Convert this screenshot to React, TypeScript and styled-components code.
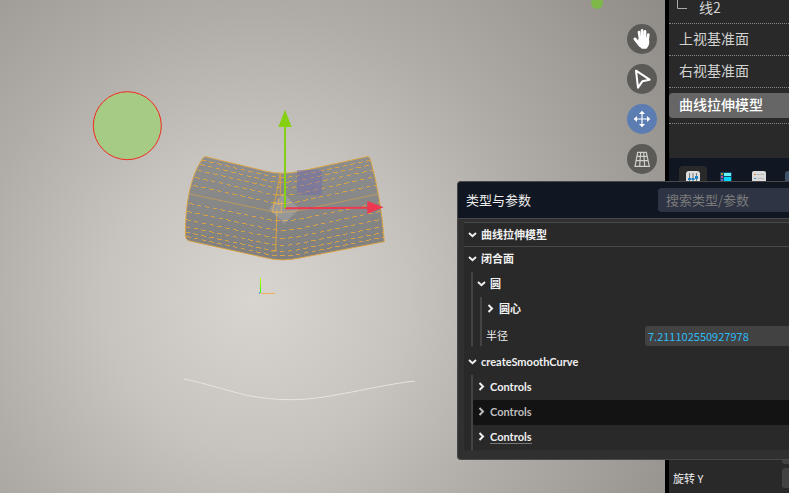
import React from 'react';
import styled, { createGlobalStyle, css } from 'styled-components';

const GlobalStyle = createGlobalStyle`
  * { box-sizing: border-box; }
  body {
    margin: 0;
    overflow: hidden;
    background: #000;
    color: #eee;
    font-family: "Noto Sans CJK SC", "Open Sans", sans-serif;
    font-size: 11px;
  }
  button, input { font: inherit; color: inherit; }
`;

const Workspace = styled.div`
  position: relative;
  display: grid;
  grid-template-columns: minmax(0, 1fr) 120px;
  gap: 4px;
  height: 100vh;
  overflow: hidden;
`;

const Viewport = styled.main`
  position: relative;
  display: flex;
  justify-content: flex-end;
  padding: 24px 8px;
  overflow: hidden;
  background: radial-gradient(circle at 255px 300px, #d8d5d0 0, #c7c4bf 150px, #b0ada8 285px, #a19e99 390px, #8d8a85 520px);
`;

const Scene = styled.svg`
  position: absolute;
  inset: 0;
  width: 100%;
  height: 100%;
`;

const Tools = styled.nav`
  position: relative;
  display: flex;
  flex-direction: column;
  gap: 10px;
`;

const ToolButton = styled.button<{ $active?: boolean }>`
  width: 30px;
  height: 30px;
  padding: 0;
  border: 0;
  border-radius: 50%;
  background: ${(p) => (p.$active ? '#5c7db1' : '#5b5a57')};
  svg { display: block; width: 100%; height: 100%; }
`;

const Sidebar = styled.aside`
  display: flex;
  flex-direction: column;
  min-width: 0;
  overflow: hidden;
  background: #292929;
`;

const Tree = styled.ul`
  height: 158px;
  flex: none;
  margin: 0;
  padding: 0;
  list-style: none;
  display: flex;
  flex-direction: column;
`;

const TreeItem = styled.li<{ $selected?: boolean }>`
  flex: none;
  display: flex;
  align-items: center;
  height: ${(p) => (p.$selected ? 36 : 32)}px;
  border-bottom: 1px dotted #858585;
`;

const TreeChild = styled.li`
  flex: none;
  display: flex;
  align-items: flex-start;
  height: 24px;
  border-bottom: 1px dotted #858585;
  color: #d2d2d2;
  font-size: 14px;
  line-height: 14px;
`;

const Branch = styled.svg`
  flex: none;
  width: 12px;
  height: 16px;
  margin: 0 11px 0 7px;
`;

const TreeLabel = styled.button<{ $selected?: boolean }>`
  flex: 1;
  height: 25px;
  padding: 0 0 4px 10px;
  border: 0;
  border-radius: 4px 0 0 4px;
  background: ${(p) => (p.$selected ? '#666' : 'transparent')};
  color: ${(p) => (p.$selected ? '#fff' : '#d2d2d2')};
  font-size: 14px;
  font-weight: ${(p) => (p.$selected ? 500 : 400)};
  line-height: 20px;
  text-align: left;
  white-space: nowrap;
`;

const TabBar = styled.div`
  flex: none;
  display: flex;
  gap: 5px;
  height: 36px;
  padding: 8px 10px 0;
  background: #111722;
`;

const Tab = styled.button<{ $active?: boolean }>`
  flex: none;
  display: flex;
  justify-content: center;
  width: 28px;
  padding: 4px 0 0;
  border: 0;
  border-radius: 4px 4px 0 0;
  background: ${(p) => (p.$active ? '#292929' : 'transparent')};
  svg { width: 16px; height: 16px; }
`;

const Properties = styled.div`
  flex: 1;
  display: flex;
  flex-direction: column;
  justify-content: flex-end;
  gap: 4px;
  min-height: 0;
  padding-bottom: 5px;
`;

const PropertyRow = styled.label`
  flex: none;
  display: grid;
  grid-template-columns: 109px 1fr;
  align-items: center;
  height: 20px;
  padding-left: 4px;
`;

const fieldStyle = css`
  min-width: 0;
  width: 100%;
  height: 20px;
  border: 0;
  border-radius: 3px 0 0 3px;
  background: #424242;
`;

const PropertyInput = styled.input`
  ${fieldStyle}
`;

const FloatingWindow = styled.section`
  position: absolute;
  top: 181px;
  left: 457px;
  right: 0;
  border: 1px solid #484848;
  border-right: 0;
  border-radius: 4px 0 0 4px;
  background: #303030;
  overflow: hidden;
`;

const WindowHeader = styled.header`
  display: grid;
  grid-template-columns: 192px 1fr;
  gap: 8px;
  align-items: center;
  height: 37px;
  border-bottom: 1px solid #484848;
  background: #111722;
`;

const WindowTitle = styled.h1`
  margin: 0;
  padding-left: 8px;
  font-size: 13px;
  font-weight: 400;
  line-height: 20px;
`;

const Search = styled.input`
  min-width: 0;
  height: 24px;
  padding: 0 8px 2px;
  border: 0;
  border-radius: 4px 0 0 4px;
  background: #2e3444;
  font-size: 13px;
  &::placeholder { color: #7a7a7a; opacity: 1; }
`;

const WindowBody = styled.div`
  margin: 3px 0 9px 6px;
  border-top: 1px solid #484848;
  background: #292929;
`;

const NodeButton = styled.button<{ $tone?: 'hover' | 'link'; $root?: boolean }>`
  display: flex;
  align-items: center;
  gap: 4px;
  width: 100%;
  height: ${(p) => (p.$root ? 24 : 25)}px;
  padding: 0 4px ${(p) => (p.$root ? 0 : 2)}px;
  border: 0;
  border-bottom: ${(p) => (p.$root ? '1px solid #484848' : '0')};
  background: ${(p) => (p.$tone === 'hover' ? '#131313' : 'transparent')};
  color: ${(p) => (p.$tone === 'hover' ? '#bdbdbd' : '#f0f0f0')};
  font-family: Lato, "Noto Sans CJK SC", sans-serif;
  font-weight: 700;
  line-height: 12px;
  text-align: left;
  span { box-shadow: ${(p) => (p.$tone === 'link' ? '0 1px #777' : 'none')}; }
  svg { flex: none; width: 9px; height: 9px; }
`;

const Group = styled.div`
  margin-left: 7px;
  border-left: 2px solid #444;
`;

const FieldRow = styled.label`
  display: grid;
  grid-template-columns: 163px 1fr;
  align-items: center;
  height: 24px;
  padding-top: 4px;
  span { padding: 0 0 2px 4px; }
`;

const ValueInput = styled.input`
  ${fieldStyle}
  padding: 0 3px;
  color: #2ebcf5;
`;

const Spacer = styled.div`
  height: 4px;
`;

function Chevron({ open }: { open?: boolean }) {
  return (
    <svg viewBox="0 0 9 9" fill="none" stroke="currentColor" strokeWidth="2">
      <path d={open ? 'M1 3 4.5 6.2 8 3' : 'M2.5 1 6 4.5 2.5 8'} />
    </svg>
  );
}

type NodeProps = {
  label: string;
  open?: boolean;
  root?: boolean;
  tone?: 'hover' | 'link';
};

function Node({ label, open, root, tone }: NodeProps) {
  return (
    <NodeButton $root={root} $tone={tone} aria-expanded={!!open}>
      <Chevron open={open} />
      <span>{label}</span>
    </NodeButton>
  );
}

// Each rib: left x, left y, fold y, right x, right y (in thirds of a pixel).
const ribs = [
  [100, 185, 235, 597, 185],
  [95, 195, 247, 601, 196],
  [90, 208, 262, 604, 209],
  [83, 226, 279, 608, 225],
  [76, 247, 301, 612, 246],
  [70, 271, 325, 618, 270],
  [60, 297, 352, 624, 297],
  [57, 325, 378, 630, 323],
  [52, 349, 406, 634, 348],
  [48, 374, 430, 637, 372],
  [47, 395, 451, 640, 394],
  [47, 411, 469, 642, 412],
  [48, 424, 483, 643, 426],
  [50, 435, 495, 643, 440],
];

const ribPath = ([lx, ly, my, rx, ry]: number[]) =>
  `M${lx} ${ly} L285 ${my - 7} Q335 ${my + 6} 390 ${my - 6} L${rx} ${ry}`;

function Mesh() {
  return (
    <g transform="translate(170 95) scale(.33333)" fill="none" stroke="#e3a63c" strokeWidth="2.6">
      <path
        d="M107 185 L285 228 Q335 241 390 229 L592 185 Q598 184 601 192 Q634 310 643 440 L390 489 Q335 501 285 488 L55 437 Q46 432 46 420 Q46 270 95 195 Q100 184 107 185Z"
        fill="url(#surface)"
      />
      {ribs.slice(1, -1).map((rib, i) => (
        <path
          key={i}
          d={ribPath(rib)}
          shapeRendering={i === 5 ? undefined : 'crispEdges'}
          strokeDasharray={i === 5 ? undefined : '14 10'}
          strokeOpacity={i === 5 ? 0.65 : 1}
        />
      ))}
      <path d="M330 237 321 290 307 350M331 237V300M326 310V332M334 318V354M321 342 317 468M306 352H336M316 300H340M310 326H330M302 468H321" />
      <path d="M341 295 297 341 343 387 388 341Z" fill="#fff" fillOpacity=".15" stroke="none" />
      <path d="M381 225H456V300H381Z" fill="#6e66b0" fillOpacity=".42" stroke="none" />
      <path d="M345 340 592 338" stroke="#ee3850" strokeWidth="6" />
      <path d="M592 318 641 337 592 356Z" fill="#ee3850" stroke="none" />
      <path d="M345 340V92" stroke="#84d011" strokeWidth="6" />
      <path d="M345 44 365 96H325Z" fill="#84d011" stroke="none" />
    </g>
  );
}

function SceneDrawing() {
  return (
    <Scene aria-hidden="true">
      <defs>
        <linearGradient id="surface" x2="0" y2="1">
          <stop stopColor="#8e8e8e" />
          <stop offset="1" stopColor="#7f7f7f" />
        </linearGradient>
        <linearGradient id="axisY" gradientUnits="userSpaceOnUse" x1="0" y1="278" x2="0" y2="293">
          <stop stopColor="#b8ff00" />
          <stop offset="1" stopColor="#2bff00" />
        </linearGradient>
      </defs>
      <circle cx="597" cy="3" r="6" fill="#7db848" />
      <circle cx="127.3" cy="125.7" r="34" fill="#a6cb85" stroke="#f22a1c" />
      <Mesh />
      <path d="M260 278h1v15h-1z" fill="url(#axisY)" />
      <path d="M261 293h14v1h-14z" fill="#f2ae5a" />
      <path d="M259 292h1v2h-1z" fill="#6aa5d8" />
      <path
        d="M184 379C205 383 224 390 248 395.500C278 401 302 401 330 396C360 391 388 384 415 381"
        fill="none"
        stroke="#e6e4e1"
      />
    </Scene>
  );
}

function HandIcon() {
  return (
    <svg viewBox="0 0 90 90" fill="none" stroke="#fff" strokeLinecap="round" strokeLinejoin="round">
      <path d="M36 24 40 52M45 19 47 52M54 22V52M64 32 61 55" strokeWidth="8" />
      <path d="M24 45 40 65" strokeWidth="9" />
      <path d="M36 46 62 42Q68 55 62 66L58 72H45L34 60Z" fill="#fff" strokeWidth="4" />
    </svg>
  );
}

function ArrowIcon() {
  return (
    <svg viewBox="0 0 90 90" fill="none" stroke="#fff" strokeWidth="6" strokeLinejoin="round">
      <path d="M27 20 68 47 46 52 33 71Z" />
    </svg>
  );
}

function MoveIcon() {
  return (
    <svg viewBox="0 0 90 90" fill="none" stroke="#fff" strokeWidth="3.5">
      <path d="M45 25V65M25 45H65" />
      <path
        d="M45 20 54 30H36ZM45 70 54 60H36ZM20 45 30 36V54ZM70 45 60 36V54Z"
        fill="#fff"
        stroke="none"
      />
    </svg>
  );
}

function PerspectiveIcon() {
  return (
    <svg viewBox="0 0 90 90" fill="none" stroke="#d0d0cd" strokeWidth="3.5">
      <path d="M32 25H58L67 67H24ZM30 37H61M28 50H64M41 25 38 67M50 25 53 67" />
    </svg>
  );
}

function SlidersIcon() {
  return (
    <svg viewBox="0 0 16 16">
      <rect x="1" y="1" width="14" height="14" rx="3" fill="#dedede" />
      <path d="M4.500 3V13M8 3V13M11.500 3V13" stroke="#777" strokeWidth="1" />
      <path d="M3 8h3v2H3zM6.500 8h3v2h-3zM10 6h3v3h-3z" fill="#1683cf" />
    </svg>
  );
}

function TableIcon() {
  return (
    <svg viewBox="0 0 16 16">
      <rect x="2" y="2" width="12" height="13" rx="1" fill="#174a66" />
      <path d="M6 3h7v3H6z" fill="#65f3ff" />
      <path d="M6 7h7v7H6z" fill="#00d9ff" />
      <path d="M3 3h2v2H3z" fill="#b79330" />
      <path d="M3 6h2v2H3z" fill="#cf4d9b" />
      <path d="M3 9h2v2H3z" fill="#7667cf" />
    </svg>
  );
}

function ListIcon() {
  return (
    <svg viewBox="0 0 16 16">
      <rect x="1" y="1" width="14" height="14" rx="2" fill="#dadada" />
      <path d="M6 4.500H13M6 8.500H13M6 12.500H13" stroke="#b8b8b8" />
      <path d="M3 4h2v1H3z" fill="#e57835" />
      <path d="M3 8h2v1H3z" fill="#3c91d0" />
      <path d="M3 11h2v2H3z" fill="#66b84a" />
    </svg>
  );
}

function ImageIcon() {
  return (
    <svg viewBox="0 0 16 16">
      <rect x="1" y="1" width="14" height="14" rx="3" fill="#3d5268" />
      <path d="M4 12 8 7 12 12Z" fill="#9cb6cc" />
    </svg>
  );
}

const tools = [
  { name: '平移', icon: <HandIcon /> },
  { name: '选择', icon: <ArrowIcon /> },
  { name: '移动', icon: <MoveIcon />, active: true },
  { name: '透视', icon: <PerspectiveIcon /> },
];

const tabs = [
  { name: '参数', icon: <SlidersIcon />, active: true },
  { name: '表格', icon: <TableIcon /> },
  { name: '列表', icon: <ListIcon /> },
  { name: '图像', icon: <ImageIcon /> },
];

export default function App() {
  return (
    <>
      <GlobalStyle />
      <Workspace>
        <Viewport>
          <SceneDrawing />
          <Tools>
            {tools.map((tool) => (
              <ToolButton key={tool.name} $active={tool.active} aria-label={tool.name}>
                {tool.icon}
              </ToolButton>
            ))}
          </Tools>
        </Viewport>

        <Sidebar>
          <Tree>
            <TreeChild>
              <Branch viewBox="0 0 12 16" fill="none" stroke="#aaa">
                <path d="M1.500 0V8.500H11" />
              </Branch>
              <span>线2</span>
            </TreeChild>
            <TreeItem>
              <TreeLabel>上视基准面</TreeLabel>
            </TreeItem>
            <TreeItem>
              <TreeLabel>右视基准面</TreeLabel>
            </TreeItem>
            <TreeItem $selected>
              <TreeLabel $selected>曲线拉伸模型</TreeLabel>
            </TreeItem>
          </Tree>
          <TabBar>
            {tabs.map((tab) => (
              <Tab key={tab.name} $active={tab.active} aria-label={tab.name}>
                {tab.icon}
              </Tab>
            ))}
          </TabBar>
          <Properties>
            <PropertyRow>
              <span>旋转 X</span>
              <PropertyInput />
            </PropertyRow>
            <PropertyRow>
              <span>旋转 Y</span>
              <PropertyInput />
            </PropertyRow>
          </Properties>
        </Sidebar>

        <FloatingWindow>
          <WindowHeader>
            <WindowTitle>类型与参数</WindowTitle>
            <Search type="search" aria-label="搜索类型/参数" placeholder="搜索类型/参数" />
          </WindowHeader>
          <WindowBody>
            <Node label="曲线拉伸模型" open root />
            <Node label="闭合面" open />
            <Group>
              <Node label="圆" open />
              <Group>
                <Node label="圆心" />
                <FieldRow>
                  <span>半径</span>
                  <ValueInput defaultValue="7.211102550927978" />
                </FieldRow>
              </Group>
            </Group>
            <Spacer />
            <Node label="createSmoothCurve" open />
            <Group>
              <Node label="Controls" />
              <Node label="Controls" tone="hover" />
              <Node label="Controls" tone="link" />
            </Group>
          </WindowBody>
        </FloatingWindow>
      </Workspace>
    </>
  );
}
